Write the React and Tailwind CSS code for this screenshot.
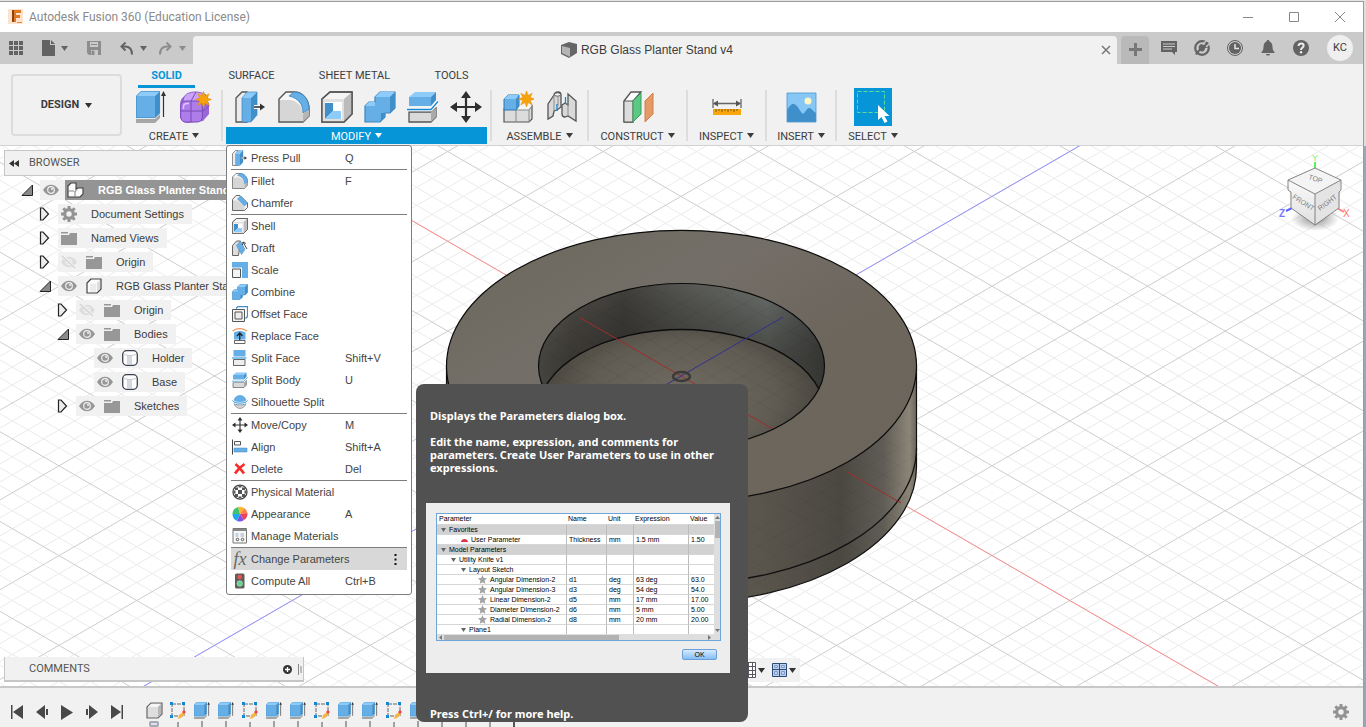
import React from 'react';

const BLUE = '#66aee6';
const BLUE_LIGHT = '#8dcbfb';
const BLUE_DARK = '#3f8fcb';
const EDGE = '#555555';

function Caret({ className = 'text-[#333333]' }) {
  return (
    <svg width="7" height="5" viewBox="0 0 7 5" className={`shrink-0 ${className}`}>
      <path d="M0 0h7L3.5 5z" fill="currentColor" />
    </svg>
  );
}

function Icon({ size = 32, children }) {
  return (
    <svg width={size} height={size} viewBox="0 0 32 32" className="shrink-0" fill="none">
      {children}
    </svg>
  );
}

const Star = ({ x, y }) => (
  <path
    transform={`translate(${x} ${y})`}
    d="M0-8l1.5 4.400L5.700-5.700 3.600-1.500 8 0 3.600 1.500l2.100 4.200-4.200-2.100L0 8l-1.500-4.400-4.200 2.100 2.100-4.200L-8 0l4.400-1.500-2.100-4.200 4.200 2.100z"
    fill="#f7a20a"
    stroke="#ea9200"
    strokeWidth=".6"
  />
);

/* Ribbon icons, drawn on a 32 grid and reused at 16 in the menu */

const Extrude = ({ size }) => (
  <Icon size={size}>
    <path d="M0 28h19l5-5v4l-5 5H0z" fill="#a6a6a6" />
    <path d="M0 5L5 0h19l-5 5z" fill={BLUE_LIGHT} />
    <path d="M19 5l5-5v22l-5 5z" fill={BLUE_DARK} />
    <path d="M0 5h19v22H0z" fill={BLUE} />
    <path d="M.4 5L5 .4h18.600V22L19 26.600H.4z" stroke="#4a90c6" strokeWidth=".8" />
    <path d="M27.500 26V4" stroke="#333" strokeWidth="1.2" />
    <path d="M27.500 0l2.500 5h-5z" fill="#333" />
  </Icon>
);

const Form = () => (
  <Icon>
    <path d="M8 4h14l7 8v11l-6 7-15 2c-5 0-8-3-8-8V14C0 8 3 5 8 4z" fill="#9a66d8" />
    <path d="M9 2c6-2 12-1 17 2l-6 7H3c0-4 2-8 6-9z" fill="#cba2f9" stroke="#7a4bb8" strokeWidth=".8" />
    <rect x=".7" y="10" width="21.600" height="21" rx="5" fill="#ad7de9" stroke="#7a4bb8" />
    <path d="M11 10v21M1 20h21c3-1 6-3 7-6M11 10l5-9M22 12l6-6" stroke="#7a4bb8" />
    <path d="M3.500 18v-2c0-2 1-3.500 3.500-3.500h2" stroke="#dfc6ff" strokeWidth="1.300" />
    <Star x={23.500} y={8.500} />
  </Icon>
);

const PressPull = ({ size }) => (
  <Icon size={size}>
    <path d="M1 7l6-6h5v30H1z" fill="#ececec" stroke={EDGE} strokeWidth="1.300" />
    <path d="M7 7h9v24H7z" fill={BLUE} />
    <path d="M7 7l5-6h10l-6 6z" fill={BLUE_LIGHT} />
    <path d="M16 7l6-6v23l-6 7z" fill={BLUE_DARK} />
    <path d="M7 7l5-6h10v23l-6 7H7z" stroke="#3d87bf" strokeWidth=".7" />
    <path d="M19 16h7" stroke="#fff" strokeWidth="4" />
    <path d="M19 16h7" stroke="#333" strokeWidth="1.600" />
    <path d="M25 12.500l5 3.500-5 3.500z" fill="#333" />
  </Icon>
);

const Fillet = ({ size }) => (
  <Icon size={size}>
    <path d="M1 31V8l7-7h8c9 0 15 8 15 17v7l-6 6z" fill="#f6f6f6" stroke={EDGE} strokeWidth="1.400" />
    <path d="M2 30V9h9c8 0 14 7 14 15v6z" fill="#d6d6d6" />
    <path d="M25 23l6-5v7l-6 6z" fill="#b5b5b5" />
    <path d="M11 5l5-4c9 0 15 7 15 17l-6 4C25 13 20 7 11 5z" fill={BLUE} stroke="#3d87bf" strokeWidth=".8" />
  </Icon>
);

const Chamfer = ({ size }) => (
  <Icon size={size}>
    <path d="M1 31V9l7-8h8l15 15v9l-6 6z" fill="#f1f1f1" stroke={EDGE} strokeWidth="1.800" />
    <path d="M2 30V11h8l15 12v7z" fill="#d6d6d6" />
    <path d="M11 8l6-6 14 14-6 6z" fill={BLUE} stroke="#3d87bf" />
  </Icon>
);

const Shell = ({ size }) => (
  <Icon size={size}>
    <path d="M1 8l8-7h22v22l-8 8H1z" fill="#f4f4f4" stroke={EDGE} strokeWidth="1.400" />
    <path d="M23 8l8-7v22l-8 8z" fill="#bcbcbc" />
    <path d="M1 8h22v23H1z" fill="#e0e0e0" />
    <path d="M4 11h17v17H4z" fill="#fff" />
    <path d="M4 12h8v8l-8 8z" fill={BLUE_DARK} />
    <path d="M12 20h8v8H4z" fill={BLUE_LIGHT} />
    <path d="M1 8l8-7h22v22l-8 8H1z" stroke={EDGE} strokeWidth="1.400" />
  </Icon>
);

const Combine = ({ size }) => (
  <Icon size={size}>
    <path d="M1 15l4-4h6V6l5-5h15v16l-5 5h-5v4l-5 5H1z" fill={BLUE} stroke="#3d87bf" strokeWidth="1.200" />
    <path d="M11 6l5-5h15l-5 5zM1 15l4-4h6v4z" fill={BLUE_LIGHT} />
    <path d="M26 6l5-5v16l-5 5zM17 22h4v4l-4 4z" fill={BLUE_DARK} />
  </Icon>
);

const SplitBody = ({ size }) => (
  <Icon size={size}>
    <path d="M2 21h22l5-4v9l-5 5H2z" fill="#d9d9d9" stroke={EDGE} strokeWidth="1.300" />
    <path d="M24 21l5-4v9l-5 5z" fill="#aaa" />
    <path d="M2 6h22v9H2z" fill={BLUE} />
    <path d="M2 6l6-5h21l-5 5z" fill={BLUE_LIGHT} />
    <path d="M24 6l5-5v8l-5 6z" fill={BLUE_DARK} />
    <path d="M0 18.500h24l7-8" stroke="#fff" strokeWidth="3.500" />
    <path d="M0 18.500h24l7-8" stroke="#1287d4" strokeWidth="1.300" />
  </Icon>
);

const Move = ({ size }) => (
  <Icon size={size}>
    <path d="M16 4v24M4 16h24" stroke="#2f2f2f" strokeWidth="2.200" />
    <path d="M16 0l5 7H11zM16 32l5-7H11zM0 16l7-5v10zM32 16l-7-5v10z" fill="#2f2f2f" />
  </Icon>
);

const NewComponent = () => (
  <Icon>
    <path d="M2 18h25l3-3v13l-3 3H2z" fill="#dcdcdc" stroke={EDGE} strokeWidth="1.200" />
    <path d="M16 15h14l-3 4H14z" fill="#f6f6f6" />
    <path d="M14 19v12M14 19h13v12M27 19l3-4" stroke="#8a8a8a" />
    <path d="M2 8l4-4h11v11l-3 4H2z" fill={BLUE} stroke="#3177ad" />
    <path d="M2 8l4-4h11l-3 4z" fill={BLUE_LIGHT} />
    <path d="M14 8l3-4v11l-3 4z" fill={BLUE_DARK} />
    <Star x={24.500} y={8} />
  </Icon>
);

const Joint = () => (
  <Icon>
    <path d="M2 13L8 4c0-2 2-3 4-3s3 1 3 3v12l-4 3-3 1-1 5-5 3z" fill="#d9d9d9" stroke={EDGE} strokeWidth="1.300" />
    <path d="M8 4v15M12 6v9" stroke="#8d8d8d" />
    <ellipse cx="11.500" cy="3.500" rx="3" ry="1.700" fill="#f7f7f7" stroke={EDGE} />
    <path d="M22 3l8 7v20l-8-5-3 1c-2 0-3-1-3-3v-9l3-2 3 2z" fill="#d9d9d9" stroke={EDGE} strokeWidth="1.300" />
    <path d="M22 13v12" stroke="#8d8d8d" />
    <path d="M11 13v7M19.500 6v7" stroke="#1287d4" strokeWidth="1.300" />
  </Icon>
);

const Construct = () => (
  <Icon>
    <path d="M2 10l7-9h10l-8 9v21H2z" fill="#ffffff" stroke={EDGE} strokeWidth="1.300" />
    <path d="M2 10h9v21H2z" fill="#dcdcdc" stroke={EDGE} />
    <path d="M11 10l8-8v21l-8 8z" fill="#5cc983" stroke="#3b9c5f" />
    <path d="M23 10l8-8v21l-8 8z" fill="#e59a66" stroke="#cf7f48" />
  </Icon>
);

const Inspect = () => (
  <Icon>
    <path d="M2 8v9M30 8v9M3 12.500h26" stroke="#666" strokeWidth="1.300" />
    <path d="M2 12.500l5-3v6zM30 12.500l-5-3v6z" fill="#555" />
    <path d="M2 18h28v6H2z" fill="#f9a70c" />
    <path d="M5 18v3M8 18v2M11 18v3M14 18v2M17 18v3M20 18v2M23 18v3M26 18v2" stroke="#80570a" />
  </Icon>
);

const Insert = () => (
  <Icon>
    <path d="M2 2h29v29H2z" fill="#86c7f6" />
    <path d="M2 19c2-3 5-7 7-6 4 1 6 8 9 10 2-1 4-7 7-6 3 2 4 4 6 5v9H2z" fill="#3f8fcb" />
    <circle cx="23" cy="10" r="3.500" fill="#fff6c6" />
    <path d="M2 2h29v29H2z" stroke="#4b9ad6" strokeWidth=".8" />
  </Icon>
);

const Draft = ({ size }) => (
  <Icon size={size}>
    <path d="M1 31V11L9 2h8l-4 29z" fill="#dcdcdc" stroke={EDGE} strokeWidth="1.800" />
    <path d="M9 11l8-9 9 17-7 10z" fill={BLUE} stroke="#3d87bf" />
    <path d="M30 18L22 4M21 10l1-6 6 3" stroke="#333" strokeWidth="1.800" />
  </Icon>
);

const Scale = ({ size }) => (
  <Icon size={size}>
    <path d="M0 0h32v32H20V11H0z" fill={BLUE} />
    <path d="M1 14h16v17H1z" fill="#f4f4f4" stroke={EDGE} strokeWidth="2" />
  </Icon>
);

const OffsetFace = ({ size }) => (
  <Icon size={size}>
    <path d="M8 5l4-4h19v20l-4 4" stroke={BLUE_DARK} strokeWidth="2.500" />
    <path d="M1 7h24v24H1z" fill="#f4f4f4" stroke={EDGE} strokeWidth="2" />
    <path d="M6 12h14v14H6z" fill="#ececec" stroke={EDGE} strokeWidth="2" />
  </Icon>
);

const ReplaceFace = ({ size }) => (
  <Icon size={size}>
    <path d="M1 6c9-6 20-6 29 0" stroke="#ea9a62" strokeWidth="2.500" />
    <path d="M4 9c7-4 16-4 23 0v14H4z" fill={BLUE} />
    <path d="M15.500 24V11M10 16l5.500-6 5.500 6" stroke="#222" strokeWidth="2.500" />
    <path d="M5 25h21v6H5z" fill="#fff" stroke={EDGE} strokeWidth="1.800" />
  </Icon>
);

const SplitFace = ({ size }) => (
  <Icon size={size}>
    <path d="M3 0h24v13H3z" fill={BLUE} />
    <path d="M0 16h29" stroke="#1287d4" strokeWidth="2" />
    <path d="M3 19h23v12H3z" fill="#eee" stroke={EDGE} strokeWidth="1.800" />
  </Icon>
);

const Silhouette = ({ size }) => (
  <Icon size={size}>
    <circle cx="16" cy="15" r="13" fill={BLUE} />
    <path d="M4 19c6 4 18 4 24 0-2 6-7 10-12 10S6 25 4 19z" fill="#d5d5d5" stroke="#777" strokeWidth="1.200" />
    <path d="M1 13c3 7 27 7 30 0" stroke="#fff" strokeWidth="5" />
    <path d="M1 13c3 7 27 7 30 0" stroke="#1287d4" strokeWidth="1.800" />
  </Icon>
);

const Align = ({ size }) => (
  <Icon size={size}>
    <path d="M1 1v30" stroke="#444" strokeWidth="2" />
    <path d="M5 5h12v7H5z" stroke="#555" strokeWidth="2" />
    <path d="M4 18h26v8H4z" fill={BLUE} stroke="#3d87bf" />
  </Icon>
);

const Delete = ({ size }) => (
  <Icon size={size}>
    <path d="M7 6c6 5 12 12 17 19M25 6C18 11 11 17 6 25" stroke="#f5302b" strokeWidth="5.500" />
  </Icon>
);

const Physical = ({ size }) => (
  <Icon size={size}>
    <circle cx="16" cy="16" r="14" fill="#fff" stroke="#444" strokeWidth="2.500" />
    <path
      d="M12 12h8v8h-8zM6 7h6v5H6zM20 7h6v5h-6zM6 20h6v6H6zM20 20h6v6h-6zM13 3h6v4h-6zM13 25h6v4h-6zM3 13h4v6H3zM25 13h4v6h-4z"
      fill="#555"
    />
  </Icon>
);

const Appearance = ({ size }) => (
  <Icon size={size}>
    <path d="M16 16L12 2a15 15 0 0 1 12 2z" fill="#ffb62e" />
    <path d="M16 16l8-12a15 15 0 0 1 7 10z" fill="#ff8040" />
    <path d="M16 16l15-2a15 15 0 0 1-7 14z" fill="#ef4257" />
    <path d="M16 16l8 12a15 15 0 0 1-14 2z" fill="#8250e6" />
    <path d="M16 16l-6 14a15 15 0 0 1-9-14z" fill="#20a9e8" />
    <path d="M16 16H1A15 15 0 0 1 12 2z" fill="#3fc36d" />
  </Icon>
);

const Manage = ({ size }) => (
  <Icon size={size}>
    <path d="M2 1h27v29H2z" fill="#f7f7f7" stroke="#777" strokeWidth="2" />
    <path d="M2 2h27v4H2z" fill="#888" />
    <path d="M7 12h6M17 12h7M7 16h6M17 16h7" stroke="#7d9cb3" strokeWidth="1.600" />
    <circle cx="11" cy="23" r="2.500" stroke="#555" strokeWidth="2" />
    <circle cx="21" cy="23" r="2.500" stroke="#555" strokeWidth="2" />
  </Icon>
);

const Fx = () => (
  <span className="w-4 shrink-0 text-center font-['Liberation_Serif',serif] text-lg leading-4 text-[#666666] italic">fx</span>
);

const Compute = ({ size }) => (
  <Icon size={size}>
    <rect x="6" y="1" width="19" height="30" rx="3" fill="#5e5e5e" />
    <circle cx="15.500" cy="8" r="4.500" fill="#ef5350" />
    <circle cx="15.500" cy="21" r="5.500" fill="#62d38b" stroke="#d8ffe6" />
  </Icon>
);

const menuGroups = [
  [{ label: 'Press Pull', keys: 'Q', icon: PressPull }],
  [
    { label: 'Fillet', keys: 'F', icon: Fillet },
    { label: 'Chamfer', icon: Chamfer },
  ],
  [
    { label: 'Shell', icon: Shell },
    { label: 'Draft', icon: Draft },
    { label: 'Scale', icon: Scale },
    { label: 'Combine', icon: Combine },
    { label: 'Offset Face', icon: OffsetFace },
    { label: 'Replace Face', icon: ReplaceFace },
    { label: 'Split Face', keys: 'Shift+V', icon: SplitFace },
    { label: 'Split Body', keys: 'U', icon: SplitBody },
    { label: 'Silhouette Split', icon: Silhouette },
  ],
  [
    { label: 'Move/Copy', keys: 'M', icon: Move },
    { label: 'Align', keys: 'Shift+A', icon: Align },
    { label: 'Delete', keys: 'Del', icon: Delete },
  ],
  [
    { label: 'Physical Material', icon: Physical },
    { label: 'Appearance', keys: 'A', icon: Appearance },
    { label: 'Manage Materials', icon: Manage },
  ],
  [
    { label: 'Change Parameters', icon: Fx, active: true },
    { label: 'Compute All', keys: 'Ctrl+B', icon: Compute },
  ],
];

function TitleBar() {
  return (
    <header className="flex h-[30px] shrink-0 items-center bg-white pl-2">
      <svg width="16" height="16" viewBox="0 0 16 16" className="shrink-0">
        <path d="M0 0h15v15H0z" fill="#fde3cd" />
        <path d="M4 1h9v3H8v2h4v3H8v4H4z" fill="#df7a22" />
        <path d="M4 1h2v12H4z" fill="#8c4310" />
        <path d="M9 13h5v1H9z" fill="#e58b43" />
      </svg>
      <h1 className="ml-[5px] flex-1 font-[Roboto,sans-serif] text-[12px] text-[#8a8a8a]">Autodesk Fusion 360 (Education License)</h1>
      {[
        ['Minimize', 'M0 5.500h10'],
        ['Maximize', 'M.5.5h9v9h-9z'],
        ['Close', 'M0 0l10 10M10 0L0 10'],
      ].map(([label, d]) => (
        <button key={label} aria-label={label} className="flex h-full w-[46px] items-center justify-center">
          <svg width="10" height="10" viewBox="0 0 10 10" fill="none" stroke="#888888">
            <path d={d} />
          </svg>
        </button>
      ))}
    </header>
  );
}

const tabIcons = [
  {
    label: 'Comments',
    draw: (
      <>
        <path d="M0 1h16v11h-2v3l-3-3H0z" fill="#636363" />
        <path d="M2 4h12M2 6.500h12M2 9h9" stroke="#cccccc" />
      </>
    ),
  },
  {
    label: 'Extensions',
    draw: (
      <>
        <circle cx="8" cy="8" r="6.800" stroke="#636363" strokeWidth="2.200" fill="none" />
        <path d="M1 14l4-5c-1-2 0-4 2-5l3 1 3-3 2 1-3 3 2 1-1 1-2 0c0 3-2 4-5 3l-3 4z" fill="#636363" />
        <path d="M9 4l3-3M12 7l3-3" stroke="#cccccc" strokeWidth="1.200" />
      </>
    ),
  },
  {
    label: 'Job Status',
    draw: (
      <>
        <circle cx="8" cy="8" r="7.500" fill="none" stroke="#636363" />
        <circle cx="8" cy="8" r="6" fill="#636363" />
        <path d="M8 4v4.500h4" stroke="#e6e6e6" strokeWidth="1.500" fill="none" />
      </>
    ),
  },
  {
    label: 'Notifications',
    draw: <path d="M8 0c1 0 1.500.6 1.500 1.500C12 2.500 12.500 5 12.500 7c0 3 1 4 2 5v1h-13v-1c1-1 2-2 2-5 0-2 .5-4.500 3-5.500C6.500.6 7 0 8 0zM6 14h4c0 2-4 2-4 0z" fill="#636363" />,
  },
  {
    label: 'Help',
    draw: (
      <>
        <circle cx="8" cy="8" r="8" fill="#636363" />
        <path d="M5.500 6c0-3.500 5.200-3.200 5.200-.3C10.700 7.500 8 7.500 8 10" stroke="#eeeeee" strokeWidth="1.900" fill="none" />
        <circle cx="8" cy="12.300" r="1.200" fill="#eeeeee" />
      </>
    ),
  },
];

function TabBar() {
  return (
    <div className="flex h-8 shrink-0 bg-[#cacaca] pt-1 font-['Liberation_Sans',Arial,sans-serif]">
      <div className="flex h-6 w-[193px] shrink-0 items-center text-[#636363]">
        <button aria-label="Data panel" className="ml-[9px]">
          <svg width="14" height="14" viewBox="0 0 14 14" fill="currentColor">
            <path d="M0 0h4v4H0zM5 0h4v4H5zM10 0h4v4h-4zM0 5h4v4H0zM5 5h4v4H5zM10 5h4v4h-4zM0 10h4v4H0zM5 10h4v4H5zM10 10h4v4h-4z" />
          </svg>
        </button>
        <button aria-label="File" className="ml-[19px] flex items-center gap-[6px]">
          <svg width="13" height="16" viewBox="0 0 13 16" fill="currentColor">
            <path d="M0 0h8v5h5v11H0zM9 0l4 4H9z" />
          </svg>
          <Caret className="text-[#636363]" />
        </button>
        <button aria-label="Save" className="ml-[19px] text-[#8d8d8d]">
          <svg width="14" height="14" viewBox="0 0 14 14">
            <path d="M0 0h14v14H2l-2-2z" fill="currentColor" />
            <path d="M3 1h8v5H3zM4 9h7v5H4z" fill="#cacaca" />
            <path d="M4 3.500h6M5 10h2v4H5z" stroke="currentColor" fill="currentColor" />
          </svg>
        </button>
        <button aria-label="Undo" className="ml-[19px] flex items-center gap-[7px]">
          <svg width="13" height="13" viewBox="0 0 13 13" fill="none">
            <path d="M5.500.5L1.500 4.500l4 4" stroke="currentColor" strokeWidth="2" />
            <path d="M2 4.500h3c4.500 0 7 2.500 7 8" stroke="currentColor" strokeWidth="2" />
          </svg>
          <Caret className="text-[#636363]" />
        </button>
        <button aria-label="Redo" className="ml-[12px] flex items-center gap-[7px] text-[#8d8d8d]">
          <svg width="13" height="13" viewBox="0 0 13 13" fill="none">
            <path d="M7.500.5l4 4-4 4" stroke="currentColor" strokeWidth="2" />
            <path d="M11 4.500H8c-4.500 0-7 2.500-7 8" stroke="currentColor" strokeWidth="2" />
          </svg>
          <Caret className="text-[#8d8d8d]" />
        </button>
      </div>
      <div className="flex flex-1 items-center rounded-t bg-[#f1f1f1] pr-[6px]">
        <div className="flex flex-1 items-center justify-center gap-1 text-[12px] text-[#3c3c3c]">
          <svg width="16" height="16" viewBox="0 0 16 16">
            <path d="M0 3l8-3 8 2v9l-8 5-8-4z" fill="#666666" />
            <path d="M1 4l8 2v9l-8-4z" fill="#b4b4b4" />
          </svg>
          RGB Glass Planter Stand v4
        </div>
        <button aria-label="Close tab">
          <svg width="10" height="10" viewBox="0 0 10 10" stroke="#777777" strokeWidth="1.500">
            <path d="M1 1l8 8M9 1L1 9" />
          </svg>
        </button>
      </div>
      <button aria-label="New tab" className="ml-1 flex w-7 items-center justify-center rounded-t bg-[#b9b9b9] pb-[2px]">
        <svg width="13" height="13" viewBox="0 0 13 13" fill="#777777">
          <path d="M5 0h3v5h5v3H8v5H5V8H0V5h5z" />
        </svg>
      </button>
      <div className="flex h-6 items-center pr-[10px] pl-[3px]">
        {tabIcons.map(({ label, draw }) => (
          <button key={label} aria-label={label} className="flex w-[33px] justify-center">
            <svg width="16" height="16" viewBox="0 0 16 16">
              {draw}
            </svg>
          </button>
        ))}
        <button className="ml-[10px] size-[26px] rounded-full bg-[#efefef] font-[Roboto,sans-serif] text-[11px] text-[#3c3c3c]">KC</button>
      </div>
    </div>
  );
}

function Divider() {
  return <div className="mt-[2px] h-[51px] w-[2px] shrink-0 bg-[#dddddd]" />;
}

function RibbonGroup({ label, width, open, children, icons }) {
  return (
    <div className={`relative flex shrink-0 flex-col ${width}`}>
      <div className={`flex h-[39px] items-center justify-center pb-px ${open ? 'gap-[11px] pl-1' : 'gap-3'}`}>
        {icons.map(([name, Glyph]) => (
          <button key={name} aria-label={name}>
            <Glyph />
          </button>
        ))}
      </div>
      <button className={`flex h-[17px] items-center justify-center gap-1 ${open ? 'mx-[3px] bg-[#0696d7] text-white' : 'text-[#3c3c3c]'}`}>
        <span className="pt-[3px]">{label}</span> <Caret className="text-current" />
      </button>
      {children}
    </div>
  );
}

const SelectIcon = () => (
  <svg width="38" height="38" viewBox="0 0 38 38" className="bg-[#0696d7]" fill="none">
    <path d="M3.500 3.500h27v21h-27z" stroke="#5fdc9a" strokeDasharray="4 2" />
    <path d="M24 17v15l3.500-3 3 6 3-1.500-3-5.500h5z" fill="#fff" />
  </svg>
);

function ModifyMenu() {
  return (
    <div
      role="menu"
      className="absolute top-[57px] left-[3px] z-20 w-[186px] rounded-[3px] border border-[#7d7d7d] bg-white px-1 pt-px pb-[2px] font-['Liberation_Sans',Arial,sans-serif] text-[11px] text-[#444444]"
    >
      {menuGroups.map((group, i) => (
        <div key={group[0].label} className={i > 0 ? 'border-t border-[#7d7d7d]' : ''}>
          {group.map(({ label, keys, icon: Glyph, active }) => (
            <button
              key={label}
              role="menuitem"
              className={`grid h-[22px] w-full grid-cols-[16px_91px_1fr_auto] items-center gap-x-[3px] pl-px text-left whitespace-nowrap ${active ? 'bg-[#d8d8d8]' : ''}`}
            >
              <Glyph size={16} />
              <span>{label}</span>
              <span>{keys}</span>
              {active && (
                <svg width="3" height="11" viewBox="0 0 3 11" className="mr-[10px]" fill="#111111">
                  <path d="M.5 0h2v2h-2zM.5 4.500h2v2h-2zM.5 9h2v2h-2z" />
                </svg>
              )}
            </button>
          ))}
        </div>
      ))}
    </div>
  );
}

function Ribbon() {
  return (
    <div className="relative z-10 flex h-[82px] shrink-0 border-b border-[#d2d2d2] bg-[#f1f1f1] font-[Roboto,sans-serif] text-[11px] text-[#3c3c3c]">
      <button className="mt-[10px] ml-[11px] flex h-[62px] w-[111px] shrink-0 items-center justify-center gap-[6px] rounded border-2 border-[#dcdcdc] font-bold">
        <span className="pt-px">DESIGN</span> <Caret />
      </button>
      <div className="ml-3">
        <nav className="flex h-6">
          <button className="ml-[4px] w-[57px] border-b-[3px] border-[#0696d7] pt-[3px] font-bold text-[#0696d7]">SOLID</button>
          <button className="ml-[20px] w-[73px]">SURFACE</button>
          <button className="ml-[20px] w-[93px]">SHEET METAL</button>
          <button className="ml-[20px] w-[61px]">TOOLS</button>
        </nav>
        <div className="flex">
          <RibbonGroup label="CREATE" width="w-[80px]" icons={[['Extrude', Extrude], ['Create Form', Form]]} />
          <div className="w-[7px]" />
          <Divider />
          <RibbonGroup
            label="MODIFY"
            width="w-[267px]"
            open
            icons={[
              ['Press Pull', PressPull],
              ['Fillet', Fillet],
              ['Shell', Shell],
              ['Combine', Combine],
              ['Split Body', SplitBody],
              ['Move/Copy', Move],
            ]}
          >
            <ModifyMenu />
          </RibbonGroup>
          <Divider />
          <RibbonGroup label="ASSEMBLE" width="w-[95px]" icons={[['New Component', NewComponent], ['Joint', Joint]]} />
          <Divider />
          <RibbonGroup label="CONSTRUCT" width="w-[97px]" icons={[['Offset Plane', Construct]]} />
          <Divider />
          <RibbonGroup label="INSPECT" width="w-[77px]" icons={[['Measure', Inspect]]} />
          <Divider />
          <RibbonGroup label="INSERT" width="w-[68px]" icons={[['Insert Image', Insert]]} />
          <Divider />
          <RibbonGroup label="SELECT" width="w-[72px]" icons={[['Select', SelectIcon]]} />
        </div>
      </div>
    </div>
  );
}

/* Isometric ground grid: one major cell is 155.5 x 89.8, split in five */
const CX = 681;
const CY = 376;
const K = 0.5775;

function gridPath(step, skipMajor) {
  let d = '';
  for (let n = -60; n <= 60; n += 1) {
    if (skipMajor ? n % 5 !== 0 : n % 5 === 0) {
      const c = n * step;
      d += `M0 ${CY + c - K * CX}L1400 ${CY + c + K * (1400 - CX)}`;
      d += `M0 ${CY + c + K * CX}L1400 ${CY + c - K * (1400 - CX)}`;
    }
  }
  return d;
}

const minorGrid = gridPath(17.96, true);
const majorGrid = gridPath(17.96, false);

function Scene() {
  return (
    <svg viewBox="0 146 1363 540" preserveAspectRatio="xMidYMid slice" className="absolute inset-0 h-full w-full" fill="none">
      <defs>
        <linearGradient id="top" x1="0" y1="0" x2="1" y2="1">
          <stop offset="0" stopColor="#6d685c" />
          <stop offset=".35" stopColor="#736e67" />
          <stop offset=".6" stopColor="#6c665d" />
          <stop offset="1" stopColor="#6b655b" />
        </linearGradient>
        <linearGradient id="side" x1="0" y1="0" x2="1" y2="0">
          <stop offset="0" stopColor="#5a564c" />
          <stop offset=".66" stopColor="#5a564d" />
          <stop offset=".84" stopColor="#4b4842" />
          <stop offset=".93" stopColor="#605d56" />
          <stop offset=".985" stopColor="#8b8577" />
          <stop offset="1" stopColor="#6b675d" />
        </linearGradient>
        <linearGradient id="wall" x1="0" y1="0" x2="1" y2="0">
          <stop offset="0" stopColor="#68675f" />
          <stop offset=".12" stopColor="#524f4a" />
          <stop offset=".3" stopColor="#43413d" />
          <stop offset=".55" stopColor="#5a5b57" />
          <stop offset=".8" stopColor="#6c706c" />
          <stop offset="1" stopColor="#4a4c49" />
        </linearGradient>
        <linearGradient id="wallShade" x1="0" y1="0" x2="0" y2="1">
          <stop offset="0" stopColor="#000" stopOpacity="0" />
          <stop offset=".45" stopColor="#1c1a17" stopOpacity=".45" />
        </linearGradient>
        <radialGradient id="floor" cx=".5" cy=".4" r=".55">
          <stop offset="0" stopColor="#716c62" />
          <stop offset=".6" stopColor="#605c53" />
          <stop offset="1" stopColor="#413e38" />
        </radialGradient>
        <clipPath id="hole">
          <ellipse cx="681.500" cy="366" rx="143" ry="82.500" />
        </clipPath>
        <clipPath id="sideClip">
          <path d="M446.500 366v101a235 135.700 0 0 0 470 0v-101z" />
        </clipPath>
      </defs>
      <path d={minorGrid} stroke="#ebebeb" />
      <path d={majorGrid} stroke="#cdcdcd" />
      <path d={`M0 ${CY - K * CX}L1400 ${CY + K * (1400 - CX)}`} stroke="#ff8f8f" />
      <path d={`M0 ${CY + K * CX}L1400 ${CY - K * (1400 - CX)}`} stroke="#9292ff" />

      <path d="M446.500 366v101a235 135.700 0 0 0 470 0v-101z" fill="url(#side)" />
      <g clipPath="url(#sideClip)">
        <path d={minorGrid} stroke="#000" opacity=".04" />
      </g>
      <path d="M446.500 366v101a235 135.700 0 0 0 470 0v-101" stroke="#111" strokeWidth="1.200" />
      <path d="M446.500 448a235 135.700 0 0 0 470 0" stroke="#111" strokeWidth="1.300" />
      <ellipse cx="681.500" cy="366" rx="235" ry="135.700" fill="url(#top)" stroke="#0c0c0c" strokeWidth="1.200" />
      <g clipPath="url(#hole)">
        <path d="M538 283h287v166H538z" fill="url(#wall)" />
        <path d="M538 283h287v166H538z" fill="url(#wallShade)" />
        <ellipse cx="681.500" cy="412" rx="143" ry="82.500" fill="url(#floor)" stroke="#0c0c0c" strokeWidth="1.300" />
        <path d={minorGrid} stroke="#000" opacity=".05" />
        <path d="M580 317.700L830 462" stroke="#a02c2c" />
        <path d="M783 317.100L640 399.700" stroke="#31318f" />
        <ellipse cx="681.500" cy="376.500" rx="8.500" ry="4.500" stroke="#3c3a38" strokeWidth="2.500" />
      </g>
      <ellipse cx="681.500" cy="366" rx="143" ry="82.500" stroke="#0c0c0c" strokeWidth="1.200" />
      <path d="M848 472.400l53 30.600" stroke="#a32b2b" />
    </svg>
  );
}

function ViewCube() {
  return (
    <svg width="76" height="84" viewBox="1277 148 76 84" className="absolute top-[2px] right-[10px]" fill="none" fontFamily="Liberation Sans, Arial, sans-serif">
      <defs>
        <radialGradient id="shade">
          <stop offset="0" stopColor="#777" stopOpacity=".8" />
          <stop offset="1" stopColor="#777" stopOpacity="0" />
        </radialGradient>
        <linearGradient id="faceLeft" x1="0" y1="0" x2="0" y2="1">
          <stop offset="0" stopColor="#fafafa" />
          <stop offset="1" stopColor="#e0e0e0" />
        </linearGradient>
      </defs>
      <ellipse cx="1315" cy="219" rx="24" ry="12" fill="url(#shade)" />
      <path d="M1315 162v6" stroke="#5cf25c" strokeWidth="2" />
      <path d="M1286 211l6-3" stroke="#6060ff" strokeWidth="2" />
      <path d="M1344 212l-7-4" stroke="#ff8080" strokeWidth="2" />
      <path d="M1288 180l27-12 26 12-26 14z" fill="#f4f4f4" />
      <path d="M1288 180l27 14v31l-24-17z" fill="url(#faceLeft)" />
      <path d="M1341 180l-26 14v31l24-17z" fill="#e4e4e4" />
      <path d="M1288 180l27-12 26 12v10l-2 2v16l-24 17-24-17v-16l-3-2zM1288 180l27 14 26-14M1315 194v31" stroke="#777" strokeWidth=".9" />
      <text x="1312" y="161" fontSize="9" fill="#7df27d">Y</text>
      <text x="1279" y="217" fontSize="10" fontWeight="bold" fill="#7a7aff">Z</text>
      <text x="1343" y="217" fontSize="10" fill="#ff7070">X</text>
      <text transform="translate(1308 179) rotate(18)" fontSize="7" fill="#7c7f84">TOP</text>
      <text transform="translate(1292 198) rotate(33)" fontSize="7" fill="#7c7f84">FRONT</text>
      <text transform="translate(1320 211) rotate(-37)" fontSize="7" fill="#7c7f84">RIGHT</text>
    </svg>
  );
}

const Eye = () => (
  <svg width="16" height="12" viewBox="0 0 16 12" className="shrink-0" fill="none">
    <path d="M0 6c4-7 12-7 16 0-4 7-12 7-16 0z" fill="#979797" />
    <circle cx="8" cy="6" r="3.300" stroke="#f2f2f2" strokeWidth="1.200" />
    <circle cx="9" cy="5" r="1" fill="#f2f2f2" />
  </svg>
);

const EyeOff = () => (
  <svg width="16" height="14" viewBox="0 0 16 14" className="shrink-0" fill="none">
    <path d="M0 7c4-7 12-7 16 0-4 7-12 7-16 0z" fill="#dddddd" />
    <circle cx="8" cy="7" r="3" stroke="#f2f2f2" />
    <path d="M2 1l12 12" stroke="#f2f2f2" strokeWidth="3" />
    <path d="M1 1l13 12" stroke="#d5d5d5" strokeWidth="1.500" />
  </svg>
);

const Gear = () => (
  <svg width="16" height="16" viewBox="0 0 16 16" className="shrink-0" fill="none">
    <circle cx="8" cy="8" r="4.300" stroke="#939393" strokeWidth="3.200" />
    <path d="M8 0v3M8 13v3M0 8h3M13 8h3M2.300 2.300l2 2M11.700 11.700l2 2M13.700 2.300l-2 2M4.300 11.700l-2 2" stroke="#939393" strokeWidth="3" />
  </svg>
);

const Folder = () => (
  <svg width="16" height="13" viewBox="0 0 16 13" className="shrink-0" fill="#979797">
    <path d="M0 0h7v1.500H0zM0 3h8l1-2h7v12H0z" />
  </svg>
);

const Assembly = () => (
  <svg width="17" height="16" viewBox="0 0 17 16" className="shrink-0" fill="#fafafa" stroke="#3e3e3e" strokeWidth="1.100">
    <path d="M1 4l3-3h5v6l2-1h5v6l-3 3H1z" />
    <path d="M8 10l2-3M8 9v6M1 9h6" stroke="#888" />
  </svg>
);

const Component = () => (
  <svg width="16" height="16" viewBox="0 0 16 16" className="shrink-0" fill="#fafafa" stroke="#444444" strokeWidth="1.200">
    <path d="M1 5l4-4h10v10l-4 4H1z" strokeLinejoin="round" />
    <path d="M11 5l3-3v9l-3 3z" fill="#dcdcdc" stroke="none" />
    <path d="M4 6h6v8H4z" fill="#ececf0" stroke="none" />
  </svg>
);

const Body = () => (
  <svg width="16" height="16" viewBox="0 0 16 16" className="shrink-0">
    <rect x=".7" y=".7" width="14.600" height="14.600" rx="4" fill="#fdfdfd" stroke="#39404d" strokeWidth="1.300" />
    <path d="M5 5h5v9H5z" fill="#d5d9de" />
    <path d="M2 4c2 2 10 2 12 0" stroke="#c6cad0" fill="none" />
  </svg>
);

const tree = [
  { indent: 'ml-[20px]', state: 'open', eye: Eye, icon: Assembly, label: 'RGB Glass Planter Stand v4', selected: true },
  { indent: 'ml-[38px]', state: 'closed', icon: Gear, label: 'Document Settings' },
  { indent: 'ml-[38px]', state: 'closed', icon: Folder, label: 'Named Views' },
  { indent: 'ml-[38px]', state: 'closed', eye: EyeOff, icon: Folder, label: 'Origin' },
  { indent: 'ml-[38px]', state: 'open', eye: Eye, icon: Component, label: 'RGB Glass Planter Stand:1' },
  { indent: 'ml-[56px]', state: 'closed', eye: EyeOff, icon: Folder, label: 'Origin' },
  { indent: 'ml-[56px]', state: 'open', eye: Eye, icon: Folder, label: 'Bodies' },
  { indent: 'ml-[74px]', eye: Eye, icon: Body, label: 'Holder' },
  { indent: 'ml-[74px]', eye: Eye, icon: Body, label: 'Base' },
  { indent: 'ml-[56px]', state: 'closed', eye: Eye, icon: Folder, label: 'Sketches' },
];

function TreeArrow({ state }) {
  return (
    <span className="flex w-5 shrink-0 pl-px">
      {state === 'open' && (
        <svg width="12" height="12" viewBox="0 0 12 12">
          <path d="M11.500 1v10.500H1z" fill="#8a8a8a" stroke="#222222" />
        </svg>
      )}
      {state === 'closed' && (
        <svg width="12" height="14" viewBox="0 0 12 14">
          <path d="M1.500 1v12H4l5.500-6L4 1z" fill="#ececec" stroke="#222222" strokeWidth="1.200" />
        </svg>
      )}
    </span>
  );
}

function Browser() {
  return (
    <aside className="absolute top-[4px] left-0 w-[304px] font-['Liberation_Sans',Arial,sans-serif] text-[11px] text-[#3c3c3c]">
      <div className="ml-1 flex h-[26px] items-center gap-[10px] border border-[#c6c6c6] bg-[#f1f1f1] pl-1 font-[Roboto,sans-serif] text-[#555555]">
        <svg width="10" height="7" viewBox="0 0 10 7" fill="#333333">
          <path d="M5 0v7L0 3.500zM10 0v7L5 3.500z" />
        </svg>
        BROWSER
      </div>
      <ul className="pt-[2px]">
        {tree.map(({ indent, state, eye: EyeIcon, icon: Glyph, label, selected }, i) => (
          <li key={i} className={`flex h-6 items-center ${indent}`}>
            <TreeArrow state={state} />
            <div className="flex h-5 items-center bg-[#f1f1f1] pl-[3px] whitespace-nowrap">
              {EyeIcon && <EyeIcon />}
              <div
                className={`flex h-5 items-center gap-[14px] ${EyeIcon ? (selected ? 'ml-[6px] pl-[2px]' : 'ml-[9px]') : ''} ${selected ? 'bg-[#949494] font-bold text-white' : ''} pr-2`}
              >
                <Glyph />
                {label}
              </div>
            </div>
          </li>
        ))}
      </ul>
    </aside>
  );
}

const params = [
  { name: 'Favorites', arrow: 'ml-[4px]', head: true },
  { name: 'User Parameter', mark: 'user', cells: ['Thickness', 'mm', '1.5 mm', '1.50'] },
  { name: 'Model Parameters', arrow: 'ml-[4px]', head: true },
  { name: 'Utility Knife v1', arrow: 'ml-[14px]' },
  { name: 'Layout Sketch', arrow: 'ml-[24px]' },
  { name: 'Angular Dimension-2', mark: 'star', cells: ['d1', 'deg', '63 deg', '63.0'] },
  { name: 'Angular Dimension-3', mark: 'star', cells: ['d3', 'deg', '54 deg', '54.0'] },
  { name: 'Linear Dimension-2', mark: 'star', cells: ['d5', 'mm', '17 mm', '17.00'] },
  { name: 'Diameter Dimension-2', mark: 'star', cells: ['d6', 'mm', '5 mm', '5.00'] },
  { name: 'Radial Dimension-2', mark: 'star', cells: ['d8', 'mm', '20 mm', '20.00'] },
  { name: 'Plane1', arrow: 'ml-[24px]' },
];

function ParamName({ row }) {
  return (
    <div className="flex h-2 items-center">
      {row.arrow && (
        <svg width="5" height="4" viewBox="0 0 5 4" className={`mr-[3px] ${row.arrow}`}>
          <path d="M0 0h5L2.500 4z" fill="#666666" />
        </svg>
      )}
      {row.mark === 'star' && (
        <svg width="9" height="9" viewBox="0 0 10 10" className="mr-[3px] ml-[41px] shrink-0">
          <path d="M5 0l1.500 3.300 3.500.4-2.600 2.400.7 3.600L5 8 1.900 9.700l.7-3.600L0 3.700l3.500-.4z" fill="#a3a3a3" />
        </svg>
      )}
      {row.mark === 'user' && (
        <svg width="7" height="4" viewBox="0 0 7 4" className="mr-[3px] ml-[24px] shrink-0">
          <path d="M0 4c0-2 2-3 3.500-3S7 2 7 4z" fill="#dd3344" />
        </svg>
      )}
      {row.name}
    </div>
  );
}

function Tooltip() {
  return (
    <div
      role="tooltip"
      className="absolute top-[383px] left-[416px] z-30 flex h-[338px] w-[332px] flex-col rounded-lg bg-[#515151] px-[10px] font-['Noto_Sans',sans-serif] text-[11px] leading-[13px] font-bold text-white"
    >
      <p className="mt-[25px] px-1">Displays the Parameters dialog box.</p>
      <p className="mt-[13px] px-1">Edit the name, expression, and comments for parameters. Create User Parameters to use in other expressions.</p>
      <div className="mt-[29px] flex h-[170px] w-[304px] flex-col bg-[#ededed] px-[10px] pt-[10px] font-['Liberation_Sans',Arial,sans-serif] text-[7px] leading-[8px] font-normal text-black">
        <div className="w-[285px] border border-[#6ea6da] bg-white">
          <div className="flex">
            <table className="flex-1 table-fixed border-separate border-spacing-0">
              <colgroup>
                <col className="w-[129px]" />
                <col className="w-[40px]" />
                <col className="w-[27px]" />
                <col className="w-[55px]" />
                <col />
              </colgroup>
              <thead>
                <tr className="h-[10px]">
                  {['Parameter', 'Name', 'Unit', 'Expression', 'Value'].map((h) => (
                    <th key={h} className="p-0 pl-[2px] text-left font-normal">
                      {h}
                    </th>
                  ))}
                </tr>
              </thead>
              <tbody>
                {params.map((row) => (
                  <tr key={row.name} className={`h-[10px] ${row.head ? 'bg-[#d2d2d2]' : ''}`}>
                    <td className="border-t border-[#d6d6d6] p-0 whitespace-nowrap">
                      <ParamName row={row} />
                    </td>
                    {(row.cells || ['', '', '', '']).map((cell, i) => (
                      <td key={i} className="border-t border-l border-t-[#d6d6d6] border-l-[#bcbcbc] p-0 pl-[2px] whitespace-nowrap">
                        {cell}
                      </td>
                    ))}
                  </tr>
                ))}
              </tbody>
            </table>
            <div className="flex w-[6px] flex-col items-center justify-between bg-[#dedede] py-[2px]">
              <svg width="5" height="22" viewBox="0 0 5 22">
                <path d="M0 3l2.500-3L5 3z" fill="#777777" />
                <path d="M0 5h5v17H0z" fill="#b3b3b3" />
              </svg>
              <svg width="5" height="3" viewBox="0 0 5 3">
                <path d="M0 0h5L2.500 3z" fill="#777777" />
              </svg>
            </div>
          </div>
          <div className="flex h-[6px] items-center justify-between bg-[#dedede] px-[2px]">
            <svg width="180" height="5" viewBox="0 0 180 5">
              <path d="M3 0v5L0 2.500z" fill="#777777" />
              <path d="M5 0h175v5H5z" fill="#b3b3b3" />
            </svg>
            <svg width="10" height="5" viewBox="0 0 10 5">
              <path d="M0 0v5l3-2.500z" fill="#777777" />
            </svg>
          </div>
        </div>
        <button className="mt-2 mr-[3px] h-[11px] w-[35px] self-end rounded-[2px] border border-[#6c9fd4] bg-linear-to-b from-[#d6ebff] to-[#84bdf5]">OK</button>
      </div>
      <p className="mt-auto mb-[2px] px-1">Press Ctrl+/ for more help.</p>
    </div>
  );
}

function Comments() {
  return (
    <div className="absolute bottom-[4px] left-1 flex h-[25px] w-[300px] items-center border-x border-b-2 border-[#c6c6c6] bg-[#f1f1f1] pt-[2px] pr-px pl-6 font-[Roboto,sans-serif] text-[11px] text-[#555555]">
      <span className="flex-1">COMMENTS</span>
      <button aria-label="Add comment" className="mr-[6px]">
        <svg width="9" height="9" viewBox="0 0 9 9">
          <circle cx="4.500" cy="4.500" r="4.500" fill="#333333" />
          <path d="M4.500 2v5M2 4.500h5" stroke="#ffffff" strokeWidth="1.300" />
        </svg>
      </button>
      <svg width="4" height="11" viewBox="0 0 4 11" stroke="#888888">
        <path d="M.5 0v11M3 2v7" />
      </svg>
    </div>
  );
}

function NavBar() {
  return (
    <div className="absolute right-[563px] bottom-[4px] flex h-6 w-[252px] items-center justify-end gap-1 bg-[#f1f1f1] pr-1">
      <button aria-label="Grid and snaps" className="flex items-center gap-[2px]">
        <svg width="16" height="16" viewBox="0 0 16 16" fill="#ffffff" stroke="#55585f">
          <path d="M.5.5h15v15H.5zM4.500 0v16M8.500 0v16M12.500 0v16M0 4.500h16M0 8.500h16M0 12.500h16" />
        </svg>
        <Caret />
      </button>
      <button aria-label="Viewports" className="flex items-center gap-[2px] pl-[3px]">
        <svg width="15" height="14" viewBox="0 0 15 14" fill="#bcd2ee" stroke="#2d4a73">
          <path d="M.5.5h7v6h-7zM7.500.5h7v6h-7zM.5 6.500h7v7h-7zM7.500 6.500h7v7h-7z" />
          <path d="M2.500 2.500h3v2h-3zM9.500 2.500h3v2h-3zM2.500 8.500h3v3h-3zM9.500 8.500h3v3h-3z" stroke="#7d9cc9" />
        </svg>
        <Caret />
      </button>
    </div>
  );
}

const SketchStep = () => (
  <svg width="16" height="18" viewBox="0 0 16 18" fill="none">
    <path d="M2 2h12v12H2z" stroke="#666666" strokeDasharray="4 1" />
    <path d="M0 0h3v3H0zM12 0h3v3h-3zM0 13h3v3H0z" fill="#1389d6" />
    <path d="M8 17l1-4 4-3 2 2-4 4z" fill="#f5b843" />
    <path d="M12 10l2-2 2 2-2 2z" fill="#ee4455" />
  </svg>
);

const ExtrudeStep = () => <Extrude size={17} />;

const BoxStep = () => (
  <svg width="17" height="17" viewBox="0 0 17 17" fill="#dedede" stroke="#666666" strokeWidth="1.200">
    <path d="M1 5l4-4h11v11l-4 4H1z" />
    <path d="M2 5l3-3h10l-3 3z" fill="#f5f5f5" stroke="none" />
    <path d="M12 5l3-3v10l-3 3z" fill="#b8b8b8" stroke="none" />
  </svg>
);

const steps = [
  BoxStep, SketchStep, ExtrudeStep, ExtrudeStep, SketchStep, ExtrudeStep, ExtrudeStep, SketchStep,
  ExtrudeStep, ExtrudeStep, SketchStep, ExtrudeStep, SketchStep, ExtrudeStep, ExtrudeStep, ExtrudeStep,
];

const transport = [
  ['Go to start', 'M0 0h1.500v14H0zM12 0v14L2 7z'],
  ['Step back', 'M9 0v14L0 7zM10 4h2v6h-2z'],
  ['Play', 'M0 0v15l12-7.500z'],
  ['Step forward', 'M0 4h2v6H0zM3 0v14l9-7z'],
  ['Go to end', 'M0 0v14l10-7zM10.500 0H12v14h-1.500z'],
];

function Timeline() {
  return (
    <footer className="flex h-[41px] shrink-0 border-t-2 border-[#c8c8c8] bg-[#f1f1f1]">
      <div className="flex h-[49px] items-center gap-[13px] pl-[11px]">
        {transport.map(([label, d]) => (
          <button key={label} aria-label={label}>
            <svg width="12" height="15" viewBox="0 0 12 15" fill="#484848">
              <path d={d} />
            </svg>
          </button>
        ))}
      </div>
      <div className="flex flex-1 overflow-hidden pl-[19px]">
        {steps.map((Step, i) => (
          <div key={i} className="flex w-6 shrink-0 flex-col items-center pt-[14px]">
            <button aria-label={`Step ${i + 1}`} className="h-[18px]">
              <Step />
            </button>
            {i === 0 ? (
              <span className="mt-[2px] h-2 w-[10px] rounded-[2px] border-2 border-[#a4a9b5] bg-[#dfe2e9]" />
            ) : (
              <span className={`mt-[2px] h-2 w-[2px] ${i === steps.length - 1 ? 'bg-[#555555]' : 'bg-[#a0a0a0]'}`} />
            )}
          </div>
        ))}
      </div>
      <button aria-label="Timeline settings" className="mt-[16px] mr-[14px] size-4">
        <Gear />
      </button>
    </footer>
  );
}

export default function App() {
  return (
    <div className="relative flex h-screen overflow-hidden border-t border-[#e4e4e4]">
      <div className="flex min-w-0 flex-1 flex-col border-t border-r border-[#9c9c9c]">
        <TitleBar />
        <TabBar />
        <Ribbon />
        <main className="relative min-h-0 flex-1 overflow-hidden bg-white">
          <Scene />
          <ViewCube />
          <Browser />
          <Comments />
          <NavBar />
        </main>
        <Timeline />
      </div>
      <div className="w-[2px] bg-linear-to-b from-[#dedede] from-20% to-[#9ba6b3] to-20%" />
      <Tooltip />
    </div>
  );
}
